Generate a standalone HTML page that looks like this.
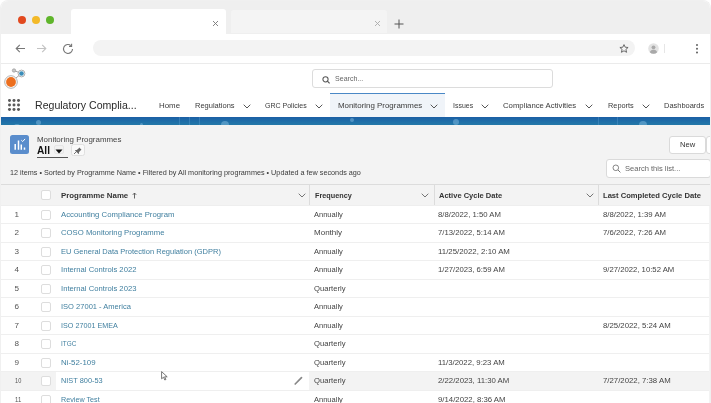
<!DOCTYPE html>
<html><head><meta charset="utf-8">
<style>
*{box-sizing:border-box;margin:0;padding:0}
html,body{width:711px;height:403px;overflow:hidden;background:#fff;font-family:"Liberation Sans",sans-serif;color:#181818}
.abs{position:absolute}
#wrap{position:absolute;left:0;top:0;width:711px;height:403px;filter:blur(0.35px)}
.t{position:absolute;white-space:nowrap;transform-origin:0 0}
#tabbar{position:absolute;left:1px;top:1px;width:709px;height:33px;background:#efefef;border-radius:7px 7px 0 0}
.dot{position:absolute;width:8px;height:8px;border-radius:50%;top:16px}
#tab1{position:absolute;left:70.5px;top:8.5px;width:155px;height:25.5px;background:#fff;border-radius:3px 3px 0 0}
#tab2{position:absolute;left:230.5px;top:9.5px;width:156px;height:23.5px;background:#f4f4f4;border-radius:3px 3px 0 0}
#toolbar{position:absolute;left:1px;top:34px;width:709px;height:30px;background:#fff;border-bottom:1px solid #ebebeb}
#addr{position:absolute;left:93px;top:40px;width:542px;height:16px;background:#f3f3f3;border-radius:8px}
#sfhead{position:absolute;left:1px;top:64px;width:709px;height:53px;background:#fff}
#search{position:absolute;left:311.5px;top:69px;width:241px;height:18.5px;border:1px solid #dcdcdc;border-radius:3px;background:#fff}
#band{position:absolute;left:1px;top:116.6px;width:709px;height:8.6px;background:linear-gradient(#1b5fa5,#1f6fa8 60%,#2378a8);overflow:hidden}
#band i{position:absolute;border-radius:50%;background:#8fc3e6;opacity:.45}
#band b{position:absolute;width:1px;top:0;height:9px;background:#5d9dd0;opacity:.4}
#content{position:absolute;left:1px;top:125px;width:709px;height:280px;background:#f3f3f3}
.row{position:absolute;left:1px;width:708px;height:18.5px;border-bottom:1px solid #efefef;background:#fff}
.row.hl{background:#f3f3f3}
.cb{position:absolute;left:41px;width:10px;height:10px;border:1px solid #dddddd;border-radius:2px;background:#fff}
.vline{position:absolute;width:1px;background:#dcdcdc;top:185px;height:20px}
.chev{position:absolute}
</style></head><body>
<div id="wrap"><div id="tabbar"></div>
<div class="dot" style="left:18px;background:#e2491f"></div>
<div class="dot" style="left:32px;background:#f3b928"></div>
<div class="dot" style="left:46px;background:#5fb52b"></div>
<div id="tab1"></div>
<svg class="abs" style="left:211.5px;top:20px" width="7" height="7" viewBox="0 0 7 7"><path d="M1 1l5 5M6 1L1 6" stroke="#777" stroke-width="0.9"/></svg>
<div id="tab2"></div>
<svg class="abs" style="left:374px;top:20px" width="7" height="7" viewBox="0 0 7 7"><path d="M1 1l5 5M6 1L1 6" stroke="#aaa" stroke-width="0.9"/></svg>
<svg class="abs" style="left:393.5px;top:19px" width="10" height="10" viewBox="0 0 10 10"><path d="M5 0.5v9M0.5 5h9" stroke="#555" stroke-width="1"/></svg>
<div id="toolbar"></div>
<svg class="abs" style="left:15px;top:44px" width="11" height="9" viewBox="0 0 11 9"><path d="M10 4.5H1.2M4.8 0.8L1.2 4.5l3.6 3.7" fill="none" stroke="#777" stroke-width="1.1"/></svg>
<svg class="abs" style="left:35.5px;top:44px" width="11" height="9" viewBox="0 0 11 9"><path d="M1 4.5h8.8M6.2 0.8L9.8 4.5 6.2 8.2" fill="none" stroke="#c2c2c2" stroke-width="1.1"/></svg>
<svg class="abs" style="left:62px;top:42.5px" width="12" height="12" viewBox="0 0 12 12"><path d="M10.5 6A4.5 4.5 0 1 1 9 2.6" fill="none" stroke="#777" stroke-width="1.1"/><path d="M9.6 0.8v2.6H7" fill="none" stroke="#777" stroke-width="1.1"/></svg>
<div id="addr"></div>
<svg class="abs" style="left:618.5px;top:44px" width="10" height="9" viewBox="0 0 10 9"><path d="M5 0.6l1.2 2.6 2.9.3-2.2 1.9.7 2.9L5 6.8 2.4 8.3l.7-2.9L0.9 3.5l2.9-.3z" fill="none" stroke="#555" stroke-width="0.85" stroke-linejoin="round"/></svg>
<svg class="abs" style="left:648px;top:43px" width="11" height="11" viewBox="0 0 11 11"><circle cx="5.5" cy="5.5" r="5.3" fill="#e3e3e3"/><circle cx="5.5" cy="4.3" r="1.9" fill="#a9a9a9"/><path d="M1.8 9.2C2.6 7.4 4 6.8 5.5 6.8S8.4 7.4 9.2 9.2A5.3 5.3 0 0 1 1.8 9.2z" fill="#a9a9a9"/></svg>
<div class="abs" style="left:664px;top:44px;width:1px;height:9px;background:#e6e6e6"></div>
<div class="abs" style="left:696.2px;top:44px;width:1.8px;height:1.8px;border-radius:50%;background:#666;box-shadow:0 3.7px #666,0 7.4px #666"></div>
<div id="sfhead"></div>
<svg class="abs" style="left:0px;top:64px" width="30" height="26" viewBox="0 0 30 26">
  <line x1="14" y1="6.5" x2="21.5" y2="9.5" stroke="#999" stroke-width="0.9"/>
  <line x1="11" y1="18" x2="21.5" y2="9.5" stroke="#999" stroke-width="0.9"/>
  <circle cx="14" cy="6.5" r="1.7" fill="#c8c8c8" stroke="#999" stroke-width="0.7"/>
  <circle cx="21.5" cy="9.5" r="3.4" fill="#fff" stroke="#9a9a9a" stroke-width="0.8"/>
  <circle cx="21.5" cy="9.5" r="2.3" fill="#3b8db8"/>
  <circle cx="11" cy="18" r="6.3" fill="#fff" stroke="#a8a8a8" stroke-width="0.9"/>
  <circle cx="11" cy="18" r="4.9" fill="#ec6f1f"/>
</svg>
<div id="search"></div>
<svg class="abs" style="left:321.5px;top:76px" width="9" height="8" viewBox="0 0 9 8"><circle cx="3.5" cy="3.3" r="2.6" fill="none" stroke="#555" stroke-width="1.05"/><path d="M5.4 5.2l2.2 2.2" stroke="#555" stroke-width="1.2"/></svg>
<div class="abs" style="left:7.8px;top:98.8px;width:2.9px;height:2.9px;border-radius:50%;background:#5a5a5a;box-shadow:4.5px 0 #5a5a5a,9px 0 #5a5a5a,0 4.5px #5a5a5a,4.5px 4.5px #5a5a5a,9px 4.5px #5a5a5a,0 9px #5a5a5a,4.5px 9px #5a5a5a,9px 9px #5a5a5a"></div>
<div class="abs" style="left:330px;top:93px;width:115px;height:24px;background:#f0f4f9;border-top:1.6px solid #4a88c6"></div>
<svg class="chev" style="left:242.5px;top:103.5px" width="8" height="5" viewBox="0 0 8 5"><path d="M0.7 0.7L4 4l3.3-3.3" fill="none" stroke="#555" stroke-width="1"/></svg>
<svg class="chev" style="left:315px;top:103.5px" width="8" height="5" viewBox="0 0 8 5"><path d="M0.7 0.7L4 4l3.3-3.3" fill="none" stroke="#555" stroke-width="1"/></svg>
<svg class="chev" style="left:430px;top:103.5px" width="8" height="5" viewBox="0 0 8 5"><path d="M0.7 0.7L4 4l3.3-3.3" fill="none" stroke="#555" stroke-width="1"/></svg>
<svg class="chev" style="left:481px;top:103.5px" width="8" height="5" viewBox="0 0 8 5"><path d="M0.7 0.7L4 4l3.3-3.3" fill="none" stroke="#555" stroke-width="1"/></svg>
<svg class="chev" style="left:585px;top:103.5px" width="8" height="5" viewBox="0 0 8 5"><path d="M0.7 0.7L4 4l3.3-3.3" fill="none" stroke="#555" stroke-width="1"/></svg>
<svg class="chev" style="left:641.5px;top:103.5px" width="8" height="5" viewBox="0 0 8 5"><path d="M0.7 0.7L4 4l3.3-3.3" fill="none" stroke="#555" stroke-width="1"/></svg>
<div id="band"><i style="left:35px;top:3px;width:5px;height:5px"></i><i style="left:139px;top:6px;width:3px;height:3px"></i><i style="left:220px;top:4px;width:8px;height:8px"></i><i style="left:349px;top:1px;width:4px;height:4px"></i><i style="left:452px;top:2px;width:6px;height:6px"></i><i style="left:638px;top:4px;width:8px;height:8px"></i><i style="left:13px;top:7px;width:6px;height:4px"></i><b style="left:178px"></b><b style="left:188px"></b><b style="left:198px"></b><b style="left:597px"></b><b style="left:616px"></b></div>
<div class="abs" style="left:1px;top:125px;width:709px;height:2px;background:#e9f4f8"></div>
<div id="content"></div>
<svg class="abs" style="left:10px;top:135px" width="19" height="19" viewBox="0 0 19 19"><rect x="0" y="0" width="19" height="19" rx="2.5" fill="#5a8dcc"/><path d="M5.2 14.8V9M8.5 14.8V5.6M11.3 14.8V9.4M14.5 14.8v-2.2" stroke="#fff" stroke-width="1.5"/><path d="M11.3 5.2l1.4 1.3 2.4-2.6" fill="none" stroke="#fff" stroke-width="1"/></svg>
<div class="abs" style="left:53.7px;top:144.5px;width:10px;height:9px;border:1px solid #e6e6e6;background:#f1f1f1;border-radius:2px"></div>
<svg class="abs" style="left:55px;top:149px" width="8" height="5" viewBox="0 0 8 5"><path d="M0.5 0.5h7L4 4.5z" fill="#111"/></svg>
<div class="abs" style="left:37px;top:157px;width:31px;height:1px;background:#555"></div>
<div class="abs" style="left:71px;top:144.3px;width:14px;height:12.2px;border:1px solid #e0e0e0;border-radius:2.5px;background:#f9f9f9"></div>
<svg class="abs" style="left:73px;top:146.2px" width="10" height="9" viewBox="0 0 10 9"><path d="M5.5 0.8l3 3-1 .6-1.6 1.9.2 1.3L5.6 8 2 4.4l.4-.5 1.3.2L5.6 2.5l.6-1z" fill="#666"/><path d="M3.5 5.5L1 8" stroke="#666" stroke-width="0.9"/></svg>
<div class="abs" style="left:669px;top:135.5px;width:37px;height:18px;border:1px solid #dadada;border-radius:3px;background:#fff"></div>
<div class="abs" style="left:706px;top:135.5px;width:10px;height:18px;border:1px solid #dadada;border-radius:3px;background:#fff"></div>
<div class="abs" style="left:605.5px;top:158.5px;width:105px;height:19px;border:1px solid #dadada;border-radius:3px;background:#fff"></div>
<svg class="abs" style="left:612px;top:163.5px" width="9" height="9" viewBox="0 0 9 9"><circle cx="3.8" cy="3.8" r="2.8" fill="none" stroke="#777" stroke-width="0.9"/><path d="M6 6l2.4 2.4" stroke="#777" stroke-width="1"/></svg>
<div class="abs" style="left:1px;top:184px;width:709px;height:21.9px;background:#f3f3f3;border-top:1px solid #dcdcdc;border-bottom:1px solid #eeeeee"></div>
<div class="vline" style="left:309px"></div>
<div class="vline" style="left:434px"></div>
<div class="vline" style="left:598px"></div>
<svg class="chev" style="left:297.5px;top:193px" width="8" height="5" viewBox="0 0 8 5"><path d="M0.7 0.7L4 4l3.3-3.3" fill="none" stroke="#666" stroke-width="0.9"/></svg>
<svg class="chev" style="left:421px;top:193px" width="8" height="5" viewBox="0 0 8 5"><path d="M0.7 0.7L4 4l3.3-3.3" fill="none" stroke="#666" stroke-width="0.9"/></svg>
<svg class="chev" style="left:586px;top:193px" width="8" height="5" viewBox="0 0 8 5"><path d="M0.7 0.7L4 4l3.3-3.3" fill="none" stroke="#666" stroke-width="0.9"/></svg>
<svg class="abs" style="left:131.5px;top:191.5px" width="5" height="7" viewBox="0 0 5 7"><path d="M2.5 6.5V1M0.8 2.8L2.5 1l1.7 1.8" fill="none" stroke="#555" stroke-width="0.9"/></svg>
<div class="cb" style="top:190px"></div>
<div class="row" style="top:205.90px"></div>
<div class="row" style="top:224.37px"></div>
<div class="row" style="top:242.84px"></div>
<div class="row" style="top:261.31px"></div>
<div class="row" style="top:279.78px"></div>
<div class="row" style="top:298.25px"></div>
<div class="row" style="top:316.72px"></div>
<div class="row" style="top:335.19px"></div>
<div class="row" style="top:353.66px"></div>
<div class="row hl" style="top:372.13px"></div>
<div class="row" style="top:390.60px"></div>
<div class="abs" style="left:56px;top:372.1px;width:253px;height:18.47px;background:#fff;border-bottom:1px solid #efefef"></div>
<svg class="abs" style="left:293px;top:375px" width="11" height="11" viewBox="0 0 11 11"><path d="M2.2 9L8.5 2.7" stroke="#888" stroke-width="1.7" stroke-linecap="round"/></svg>
<div class="cb" style="top:210.00px"></div>
<div class="cb" style="top:228.47px"></div>
<div class="cb" style="top:246.94px"></div>
<div class="cb" style="top:265.41px"></div>
<div class="cb" style="top:283.88px"></div>
<div class="cb" style="top:302.35px"></div>
<div class="cb" style="top:320.82px"></div>
<div class="cb" style="top:339.29px"></div>
<div class="cb" style="top:357.76px"></div>
<div class="cb" style="top:376.23px"></div>
<div class="cb" style="top:394.70px"></div>
<span class="t" style="left:159.10px;top:102.10px;font-size:7.8px;line-height:7.8px;font-weight:400;color:#3a3a3a;transform:scaleX(1.0116)">Home</span>
<span class="t" style="left:194.70px;top:102.10px;font-size:7.8px;line-height:7.8px;font-weight:400;color:#3a3a3a;transform:scaleX(0.9618)">Regulations</span>
<span class="t" style="left:265.20px;top:102.10px;font-size:7.8px;line-height:7.8px;font-weight:400;color:#3a3a3a;transform:scaleX(0.8997)">GRC Policies</span>
<span class="t" style="left:337.80px;top:102.10px;font-size:7.8px;line-height:7.8px;font-weight:400;color:#3a3a3a;transform:scaleX(1.0132)">Monitoring Programmes</span>
<span class="t" style="left:452.80px;top:102.10px;font-size:7.8px;line-height:7.8px;font-weight:400;color:#3a3a3a;transform:scaleX(0.8924)">Issues</span>
<span class="t" style="left:503.30px;top:102.10px;font-size:7.8px;line-height:7.8px;font-weight:400;color:#3a3a3a;transform:scaleX(0.9933)">Compliance Activities</span>
<span class="t" style="left:607.50px;top:102.10px;font-size:7.8px;line-height:7.8px;font-weight:400;color:#3a3a3a;transform:scaleX(0.9415)">Reports</span>
<span class="t" style="left:664.00px;top:102.10px;font-size:7.8px;line-height:7.8px;font-weight:400;color:#3a3a3a;transform:scaleX(0.9563)">Dashboards</span>
<span class="t" style="left:34.50px;top:101.18px;font-size:10.3px;line-height:10.3px;font-weight:400;color:#2a2a2a;transform:scaleX(1.0260)">Regulatory Complia...</span>
<span class="t" style="left:334.70px;top:75.15px;font-size:7.5px;line-height:7.5px;font-weight:400;color:#666;transform:scaleX(0.9422)">Search...</span>
<span class="t" style="left:36.75px;top:136.05px;font-size:7.5px;line-height:7.5px;font-weight:400;color:#444;transform:scaleX(1.0551)">Monitoring Programmes</span>
<span class="t" style="left:37.00px;top:144.93px;font-size:10.6px;line-height:10.6px;font-weight:700;color:#111;transform:scaleX(0.9563)">All</span>
<span class="t" style="left:10.10px;top:168.61px;font-size:7.2px;line-height:7.2px;font-weight:400;color:#3a3a3a;transform:scaleX(1.0074)">12 items • Sorted by Programme Name • Filtered by All monitoring programmes • Updated a few seconds ago</span>
<span class="t" style="left:679.90px;top:141.20px;font-size:7.8px;line-height:7.8px;font-weight:400;color:#333;transform:scaleX(0.9770)">New</span>
<span class="t" style="left:624.60px;top:164.60px;font-size:7.8px;line-height:7.8px;font-weight:400;color:#666;transform:scaleX(0.9679)">Search this list...</span>
<span class="t" style="left:60.85px;top:192.07px;font-size:7.6px;line-height:7.6px;font-weight:700;color:#333;transform:scaleX(1.0344)">Programme Name</span>
<span class="t" style="left:314.70px;top:192.07px;font-size:7.6px;line-height:7.6px;font-weight:700;color:#333;transform:scaleX(0.9571)">Frequency</span>
<span class="t" style="left:439.10px;top:192.07px;font-size:7.6px;line-height:7.6px;font-weight:700;color:#333;transform:scaleX(0.9904)">Active Cycle Date</span>
<span class="t" style="left:603.00px;top:192.07px;font-size:7.6px;line-height:7.6px;font-weight:700;color:#333">Last Completed Cycle Date</span>
<span class="t" style="left:14.60px;top:210.94px;font-size:8.1px;line-height:8.1px;font-weight:400;color:#555">1</span>
<span class="t" style="left:60.80px;top:210.94px;font-size:8.1px;line-height:8.1px;font-weight:400;color:#4280a0;transform:scaleX(0.9589)">Accounting Compliance Program</span>
<span class="t" style="left:314.20px;top:210.94px;font-size:8.1px;line-height:8.1px;font-weight:400;color:#444;transform:scaleX(0.9281)">Annually</span>
<span class="t" style="left:438.40px;top:210.94px;font-size:8.1px;line-height:8.1px;font-weight:400;color:#444;transform:scaleX(0.9563)">8/8/2022, 1:50 AM</span>
<span class="t" style="left:603.00px;top:210.94px;font-size:8.1px;line-height:8.1px;font-weight:400;color:#444;transform:scaleX(0.9593)">8/8/2022, 1:39 AM</span>
<span class="t" style="left:14.60px;top:229.41px;font-size:8.1px;line-height:8.1px;font-weight:400;color:#555">2</span>
<span class="t" style="left:60.80px;top:229.41px;font-size:8.1px;line-height:8.1px;font-weight:400;color:#4280a0;transform:scaleX(0.9541)">COSO Monitoring Programme</span>
<span class="t" style="left:314.20px;top:229.41px;font-size:8.1px;line-height:8.1px;font-weight:400;color:#444;transform:scaleX(0.9900)">Monthly</span>
<span class="t" style="left:438.40px;top:229.41px;font-size:8.1px;line-height:8.1px;font-weight:400;color:#444;transform:scaleX(0.9520)">7/13/2022, 5:14 AM</span>
<span class="t" style="left:603.00px;top:229.41px;font-size:8.1px;line-height:8.1px;font-weight:400;color:#444;transform:scaleX(0.9593)">7/6/2022, 7:26 AM</span>
<span class="t" style="left:14.60px;top:247.88px;font-size:8.1px;line-height:8.1px;font-weight:400;color:#555">3</span>
<span class="t" style="left:60.80px;top:247.88px;font-size:8.1px;line-height:8.1px;font-weight:400;color:#4280a0;transform:scaleX(0.9282)">EU General Data Protection Regulation (GDPR)</span>
<span class="t" style="left:314.20px;top:247.88px;font-size:8.1px;line-height:8.1px;font-weight:400;color:#444;transform:scaleX(0.9281)">Annually</span>
<span class="t" style="left:438.40px;top:247.88px;font-size:8.1px;line-height:8.1px;font-weight:400;color:#444;transform:scaleX(0.9705)">11/25/2022, 2:10 AM</span>
<span class="t" style="left:14.60px;top:266.35px;font-size:8.1px;line-height:8.1px;font-weight:400;color:#555">4</span>
<span class="t" style="left:60.80px;top:266.35px;font-size:8.1px;line-height:8.1px;font-weight:400;color:#4280a0;transform:scaleX(0.9471)">Internal Controls 2022</span>
<span class="t" style="left:314.20px;top:266.35px;font-size:8.1px;line-height:8.1px;font-weight:400;color:#444;transform:scaleX(0.9281)">Annually</span>
<span class="t" style="left:438.40px;top:266.35px;font-size:8.1px;line-height:8.1px;font-weight:400;color:#444;transform:scaleX(0.9520)">1/27/2023, 6:59 AM</span>
<span class="t" style="left:603.00px;top:266.35px;font-size:8.1px;line-height:8.1px;font-weight:400;color:#444;transform:scaleX(0.9535)">9/27/2022, 10:52 AM</span>
<span class="t" style="left:14.60px;top:284.82px;font-size:8.1px;line-height:8.1px;font-weight:400;color:#555">5</span>
<span class="t" style="left:60.80px;top:284.82px;font-size:8.1px;line-height:8.1px;font-weight:400;color:#4280a0;transform:scaleX(0.9471)">Internal Controls 2023</span>
<span class="t" style="left:314.20px;top:284.82px;font-size:8.1px;line-height:8.1px;font-weight:400;color:#444;transform:scaleX(0.9463)">Quarterly</span>
<span class="t" style="left:14.60px;top:303.29px;font-size:8.1px;line-height:8.1px;font-weight:400;color:#555">6</span>
<span class="t" style="left:60.80px;top:303.29px;font-size:8.1px;line-height:8.1px;font-weight:400;color:#4280a0;transform:scaleX(0.9307)">ISO 27001 - America</span>
<span class="t" style="left:314.20px;top:303.29px;font-size:8.1px;line-height:8.1px;font-weight:400;color:#444;transform:scaleX(0.9281)">Annually</span>
<span class="t" style="left:14.60px;top:321.76px;font-size:8.1px;line-height:8.1px;font-weight:400;color:#555">7</span>
<span class="t" style="left:60.80px;top:321.76px;font-size:8.1px;line-height:8.1px;font-weight:400;color:#4280a0;transform:scaleX(0.8886)">ISO 27001 EMEA</span>
<span class="t" style="left:314.20px;top:321.76px;font-size:8.1px;line-height:8.1px;font-weight:400;color:#444;transform:scaleX(0.9281)">Annually</span>
<span class="t" style="left:603.00px;top:321.76px;font-size:8.1px;line-height:8.1px;font-weight:400;color:#444;transform:scaleX(0.9633)">8/25/2022, 5:24 AM</span>
<span class="t" style="left:14.60px;top:340.23px;font-size:8.1px;line-height:8.1px;font-weight:400;color:#555">8</span>
<span class="t" style="left:60.80px;top:340.23px;font-size:8.1px;line-height:8.1px;font-weight:400;color:#4280a0;transform:scaleX(0.7954)">ITGC</span>
<span class="t" style="left:314.20px;top:340.23px;font-size:8.1px;line-height:8.1px;font-weight:400;color:#444;transform:scaleX(0.9463)">Quarterly</span>
<span class="t" style="left:14.60px;top:358.70px;font-size:8.1px;line-height:8.1px;font-weight:400;color:#555">9</span>
<span class="t" style="left:60.80px;top:358.70px;font-size:8.1px;line-height:8.1px;font-weight:400;color:#4280a0;transform:scaleX(0.9739)">Ni-52-109</span>
<span class="t" style="left:314.20px;top:358.70px;font-size:8.1px;line-height:8.1px;font-weight:400;color:#444;transform:scaleX(0.9463)">Quarterly</span>
<span class="t" style="left:438.40px;top:358.70px;font-size:8.1px;line-height:8.1px;font-weight:400;color:#444;transform:scaleX(0.9601)">11/3/2022, 9:23 AM</span>
<span class="t" style="left:15.20px;top:377.17px;font-size:8.1px;line-height:8.1px;font-weight:400;color:#555;transform:scaleX(0.6946)">10</span>
<span class="t" style="left:60.80px;top:377.17px;font-size:8.1px;line-height:8.1px;font-weight:400;color:#4280a0;transform:scaleX(0.9098)">NIST 800-53</span>
<span class="t" style="left:314.20px;top:377.17px;font-size:8.1px;line-height:8.1px;font-weight:400;color:#444;transform:scaleX(0.9463)">Quarterly</span>
<span class="t" style="left:438.40px;top:377.17px;font-size:8.1px;line-height:8.1px;font-weight:400;color:#444;transform:scaleX(0.9612)">2/22/2023, 11:30 AM</span>
<span class="t" style="left:603.00px;top:377.17px;font-size:8.1px;line-height:8.1px;font-weight:400;color:#444;transform:scaleX(0.9633)">7/27/2022, 7:38 AM</span>
<span class="t" style="left:15.20px;top:395.64px;font-size:8.1px;line-height:8.1px;font-weight:400;color:#555;transform:scaleX(0.7416)">11</span>
<span class="t" style="left:60.80px;top:395.64px;font-size:8.1px;line-height:8.1px;font-weight:400;color:#4280a0;transform:scaleX(0.8900)">Review Test</span>
<span class="t" style="left:314.20px;top:395.64px;font-size:8.1px;line-height:8.1px;font-weight:400;color:#444;transform:scaleX(0.9281)">Annually</span>
<span class="t" style="left:438.40px;top:395.64px;font-size:8.1px;line-height:8.1px;font-weight:400;color:#444;transform:scaleX(0.9619)">9/14/2022, 8:36 AM</span>
<svg class="abs" style="left:160.5px;top:370.8px" width="8" height="10" viewBox="0 0 8 10"><path d="M0.6 0.6v7.2l1.9-1.6 1.3 2.8 1.1-.5-1.3-2.7h2.6z" fill="#fff" stroke="#555" stroke-width="0.8" stroke-linejoin="round"/></svg>
<div class="abs" style="left:0;top:0;width:711px;height:403px;border:1px solid #f0f0f0;border-bottom:none;border-radius:8px 8px 0 0;pointer-events:none"></div>

</div></body></html>
